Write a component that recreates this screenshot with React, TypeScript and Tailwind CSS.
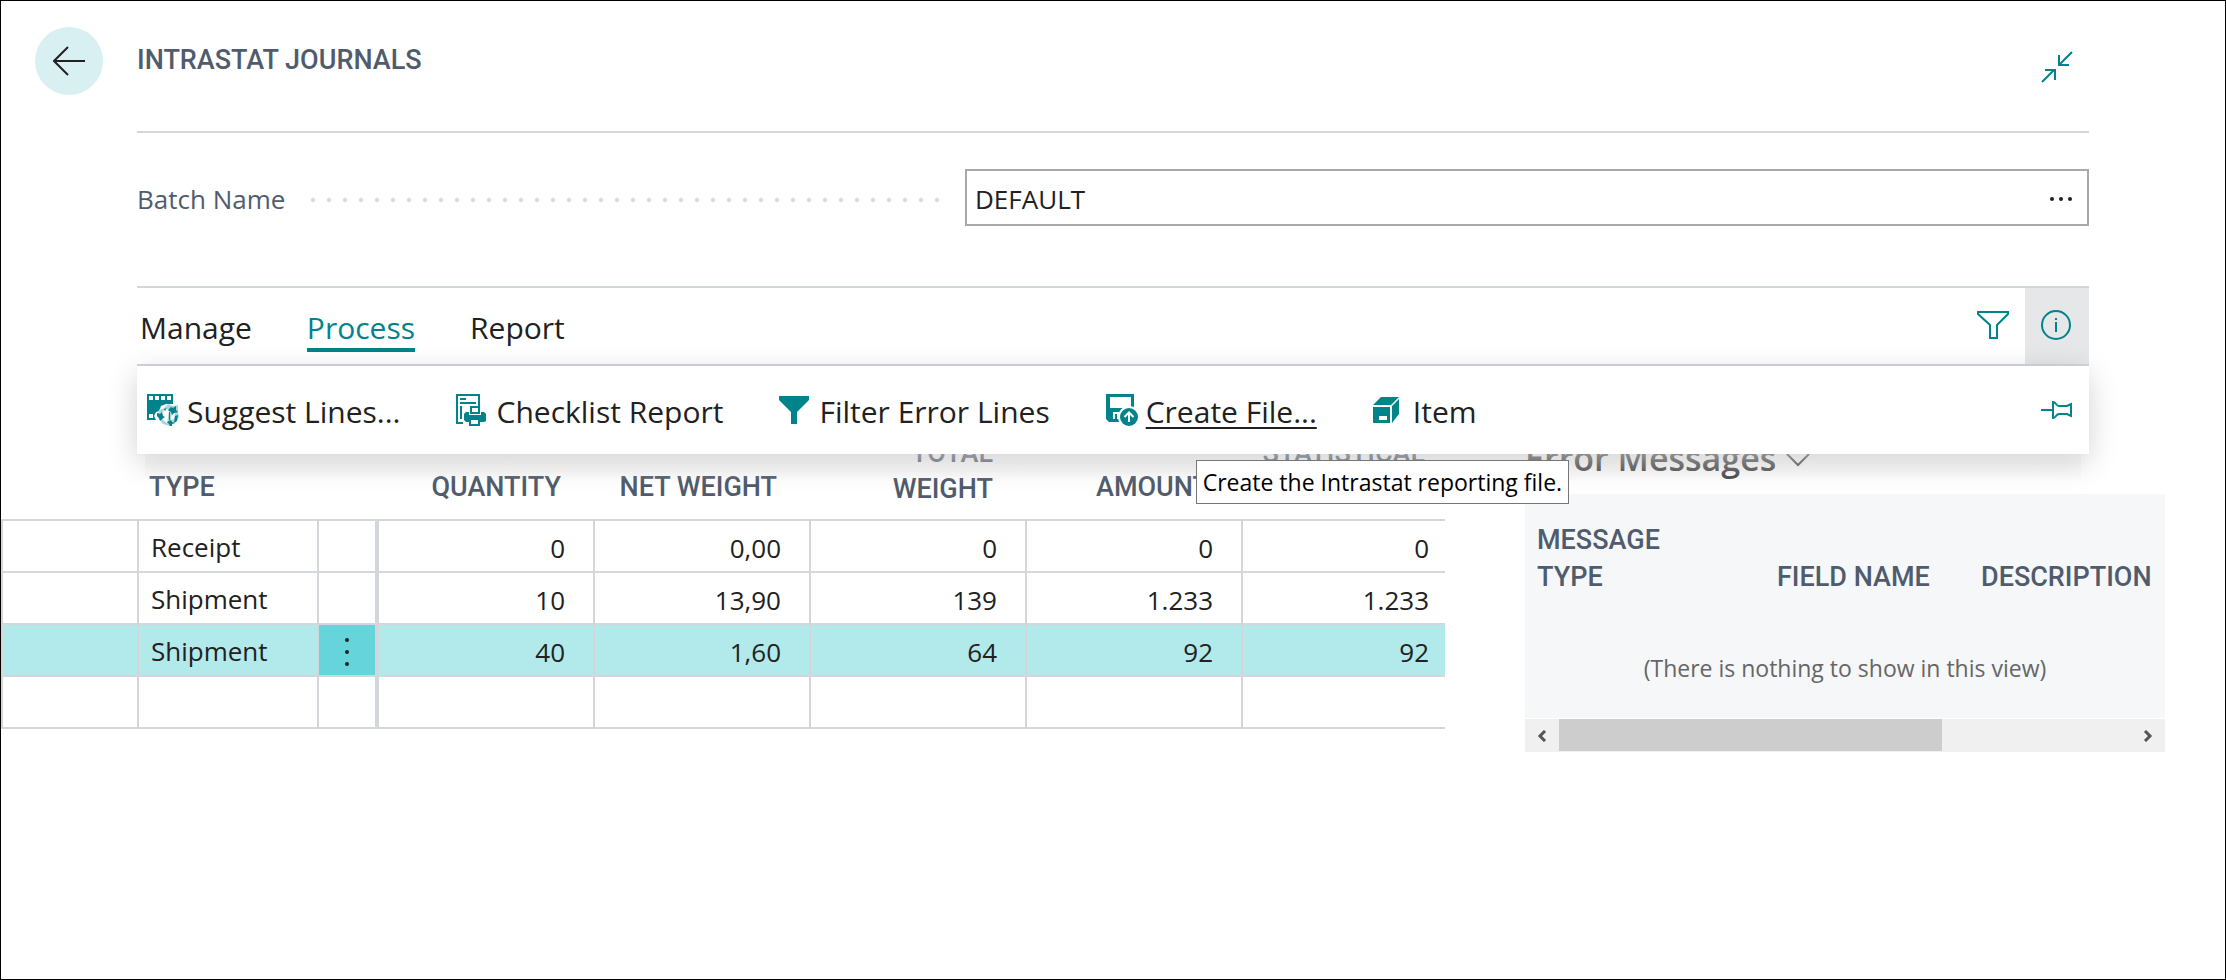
import type { ReactNode } from 'react';

const SuggestLinesIcon = () => (
  <svg width="32" height="32" viewBox="0 0 32 32" fill="#00838a">
    <path d="M0 0h26v26H0z" />
    <path fill="#fff" d="M2 2h4v4H2zM8 2h4v4H8zM14 2h4v4h-4zM20 2h4v4h-4zM2 20h4v4H2z" />
    <path fill="#fff" d="M19 10h7v16H9l-2-4 2-4 3-1 2-5z" />
    <path fill="#a9d6d8" d="M21 10l5 2 5-1v6l1 6-4 6-6 3-6-2-4-5-2-4 3-5 4-2z" />
    <path fill="#fff" d="M19 14l3 3-2 12-4-3-1-7zM25 17l3 2-1 6-3 1z" />
    <path d="M24 13l2 1 3-2v4l2 2-4 1-2 2-1-3-3-2zM10 19l3 1 2-2 1 4 2 1-3 2-2 2-1-3-2-2zM20 28l2-1 2-1 1 2 3 1-3 1v2h-2l-1-2zM28 22l3-1-1 6-3 2z" />
    <path d="M22 18h1v8h-1zM17 15l3-1-2 3z" />
  </svg>
);

const ChecklistIcon = () => (
  <svg width="30" height="32" viewBox="0 0 30 32" fill="#00838a">
    <path d="M0 0h24v12h-2V2H2v26h5v2H0zM4 4h6v2H4zM4 8h16v2H4zM4 12h2v13H4z" />
    <path fillRule="evenodd" d="M14 12h10v8h-10zM16 14v4h6v-4z" />
    <path fillRule="evenodd" d="M10 18h3v3h12v-3h3l2 2v7l-2 1h-4v4H13v-4h-3l-2-2v-6zM15 26v4h7v-4z" />
  </svg>
);

const FilterSolidIcon = () => (
  <svg width="30" height="28" viewBox="0 0 30 28" fill="#00838a">
    <path d="M0 0h30v4L18 16v12h-6V16L0 4z" />
  </svg>
);

const CreateFileIcon = () => (
  <svg width="32" height="32" viewBox="0 0 32 32" fill="#00838a">
    <path fillRule="evenodd" d="M0 0h28v28H3l-3-3zM4 3v11h21V3z" />
    <path fill="#fff" d="M7 18h6v7H7z" />
    <path d="M9 20h2v6H9z" />
    <circle cx="23" cy="23" r="11" fill="#fff" />
    <circle cx="23" cy="23" r="9" />
    <path fill="none" stroke="#fff" strokeWidth="2" d="M23 28V19M18.500 23l4.500-4.500 4.500 4.500" />
  </svg>
);

const ItemIcon = () => (
  <svg width="26" height="26" viewBox="0 0 26 26" fill="#00838a">
    <path d="M0 8l8-8h18l-8 8zM0 10h17v16H0zM19 9l7-7v15l-7 9z" />
    <path fill="#fff" d="M6 19h8v4H6z" />
  </svg>
);

const BackIcon = () => (
  <svg width="32" height="30" viewBox="0 0 32 30" fill="none" stroke="#212121" strokeWidth="2">
    <path d="M32 15H1M15 1L1 15l14 14" />
  </svg>
);

const CollapseIcon = () => (
  <svg width="32" height="32" viewBox="0 0 32 32" fill="none" stroke="#00838a" strokeWidth="2">
    <path d="M31 1L19 13M18 4v10h10M1 31l12-12M4 19h10v10" />
  </svg>
);

const FilterIcon = () => (
  <svg width="32" height="28" viewBox="0 0 32 28" fill="none" stroke="#00838a" strokeWidth="2">
    <path d="M1 1h30v2L20 14v13h-7V14L1 3z" />
  </svg>
);

const InfoIcon = () => (
  <svg width="30" height="30" viewBox="0 0 30 30" fill="none" stroke="#00838a" strokeWidth="2">
    <circle cx="15" cy="15" r="14" />
    <path d="M15 12v10M15 8v2" />
  </svg>
);

const PinIcon = () => (
  <svg width="32" height="18" viewBox="0 0 32 18" fill="none" stroke="#00838a" strokeWidth="2">
    <path d="M0 9h12M12 1v16c3 0 3-4 6-4h8l4 2V3l-4 2h-8c-3 0-3-4-6-4z" />
  </svg>
);

const tabs = [
  { label: 'Manage', active: false },
  { label: 'Process', active: true },
  { label: 'Report', active: false }
];

const ActionButton = ({ icon, label, underlined, tooltip }: {
  icon: ReactNode;
  label: string;
  underlined?: boolean;
  tooltip?: string;
}) => (
  <div className="relative">
    <button type="button" className="flex items-center gap-2">
      <span className="w-8">{icon}</span>
      <span className={`pt-1 ${underlined ? 'underline decoration-2 underline-offset-4' : ''}`}>{label}</span>
    </button>
    {tooltip && (
      <div role="tooltip" className="absolute top-full left-[90px] mt-7 border border-[#767676] bg-white px-1.5 text-[23px] leading-[42px] whitespace-nowrap text-black">
        {tooltip}
      </div>
    )}
  </div>
);

const lines = [
  { type: 'Receipt', values: ['0', '0,00', '0', '0', '0'], selected: false },
  { type: 'Shipment', values: ['10', '13,90', '139', '1.233', '1.233'], selected: false },
  { type: 'Shipment', values: ['40', '1,60', '64', '92', '92'], selected: true },
  { type: '', values: ['', '', '', '', ''], selected: false }
];

const amountHeaders = [
  { label: 'QUANTITY', padding: 'pr-8 pb-3.5' },
  { label: 'NET WEIGHT', padding: 'pr-8 pb-3.5' },
  { label: 'TOTAL WEIGHT', padding: 'pr-8 pb-3 pl-20' },
  { label: 'AMOUNT', padding: 'pr-8 pb-3.5' },
  { label: 'STATISTICAL VALUE', padding: 'pr-5 pb-3 pl-2' }
];

const JournalLines = () => (
  <table className="w-full table-fixed border-separate border-spacing-0 text-[26px] text-[#212121]">
    <colgroup>
      <col className="w-[136px]" />
      <col className="w-[180px]" />
      <col className="w-[58px]" />
      <col className="w-[218px]" />
      <col className="w-[216px]" />
      <col className="w-[216px]" />
      <col className="w-[216px]" />
      <col />
    </colgroup>
    <thead>
      <tr className="h-[155px] align-bottom font-[Roboto] text-[27px] leading-9 text-[#505c6d]">
        <td className="border-b-2 border-[#d3d6db]" />
        <th className="border-b-2 border-[#d3d6db] pb-3.5 pl-3 text-left font-medium">TYPE</th>
        <td className="border-b-2 border-[#d3d6db]" />
        {amountHeaders.map((header) => (
          <th key={header.label} className={`border-b-2 border-[#d3d6db] text-right font-medium ${header.padding}`}>
            {header.label}
          </th>
        ))}
      </tr>
    </thead>
    <tbody>
      {lines.map((line, row) => (
        <tr key={row} className={`h-[52px] ${line.selected ? 'bg-[#b2e9eb]' : ''}`}>
          <td className="border-b-2 border-l-2 border-[#d3d6db]" />
          <td className="border-b-2 border-l-2 border-[#d3d6db] pt-0.5 pl-3">{line.type}</td>
          <td className={`border-b-2 border-l-2 border-[#d3d6db] ${line.selected ? 'bg-[#66d4db]' : ''}`}>
            {line.selected && (
              <button type="button" aria-label="Show more options" className="flex w-full justify-center pt-1">
                <svg width="4" height="30" viewBox="0 0 4 30" fill="#212121">
                  <circle cx="2" cy="3" r="2" />
                  <circle cx="2" cy="15" r="2" />
                  <circle cx="2" cy="27" r="2" />
                </svg>
              </button>
            )}
          </td>
          {line.values.map((value, i) => (
            <td
              key={i}
              className={`border-b-2 border-[#d3d6db] pt-1 text-right ${i === 0 ? 'border-l-4' : 'border-l-2'} ${i === 4 ? 'pr-4' : 'pr-7'}`}
            >
              {value}
            </td>
          ))}
        </tr>
      ))}
    </tbody>
  </table>
);

const ErrorMessages = () => (
  <section className="w-[640px] shrink-0">
    <h2 className="flex h-32 items-end gap-2.5 pb-4 text-[34px] leading-10 font-semibold text-[#444]">
      Error Messages
      <svg width="24" height="28" viewBox="0 0 24 28" fill="none" stroke="#444" strokeWidth="2">
        <path d="M1 4l11 11L23 4" />
      </svg>
    </h2>
    <div className="h-56 bg-[#f5f7f9] pt-7">
      <table className="w-full table-fixed text-left">
        <thead>
          <tr className="align-bottom font-[Roboto] text-[27px] leading-[37px] text-[#505c6d]">
            <th className="w-[240px] pr-24 pl-3 font-medium">MESSAGE TYPE</th>
            <th className="w-[204px] pl-3 font-medium whitespace-nowrap">FIELD NAME</th>
            <th className="pl-3 font-medium">DESCRIPTION</th>
          </tr>
        </thead>
        <tbody>
          <tr>
            <td colSpan={3} className="pt-[52px] text-center text-[23px] leading-10 text-[#666]">
              (There is nothing to show in this view)
            </td>
          </tr>
        </tbody>
      </table>
    </div>
    <div className="mt-px flex h-[33px] items-center justify-between bg-[#f0f0f0]">
      <button type="button" aria-label="Scroll left" className="flex w-[34px] justify-center">
        <svg width="10" height="12" viewBox="0 0 10 12" fill="none" stroke="#555" strokeWidth="3">
          <path d="M8 1L3 6l5 5" />
        </svg>
      </button>
      <div className="flex h-8 flex-1 self-start">
        <div className="w-[67%] bg-[#cdcdcd]" />
      </div>
      <button type="button" aria-label="Scroll right" className="flex w-[34px] justify-center">
        <svg width="10" height="12" viewBox="0 0 10 12" fill="none" stroke="#555" strokeWidth="3">
          <path d="M2 1l5 5-5 5" />
        </svg>
      </button>
    </div>
  </section>
);

export default function App() {
  return (
    <main className="min-h-screen border border-black bg-white font-['Open_Sans',sans-serif] text-[#212121]">
      <header className="flex items-start pr-[136px] pl-[34px]">
        <button
          type="button"
          aria-label="Back"
          className="mt-[26px] mr-[34px] flex size-[68px] shrink-0 items-center justify-center rounded-full bg-[#d9f0f2]"
        >
          <BackIcon />
        </button>
        <div className="flex h-[132px] flex-1 items-start justify-between border-b-2 border-[#d3d6db] pr-4">
          <h1 className="mt-10 font-[Roboto] text-[27px] leading-[38px] font-medium text-[#505c6d]">INTRASTAT JOURNALS</h1>
          <button type="button" aria-label="Collapse" className="mt-[50px]">
            <CollapseIcon />
          </button>
        </div>
      </header>

      <div className="px-[136px]">
        <div className="mt-9 flex h-[57px] items-center">
          <label htmlFor="batch-name" className="flex w-[828px] items-center pt-1 pr-4 text-[26px] text-[#505c6d]">
            Batch Name
            <span className="ml-5 h-4 flex-1 bg-[radial-gradient(circle,#d3d6db_1px,transparent_3px)] bg-[size:16px_16px]" />
          </label>
          <div className="flex h-full flex-1 items-center border-2 border-[#a8a8a8] pr-3.5">
            <input id="batch-name" defaultValue="DEFAULT" className="h-full flex-1 px-2 pt-0.5 text-[26px] outline-none" />
            <button type="button" aria-label="Choose batch" className="pt-0.5">
              <svg width="24" height="4" viewBox="0 0 24 4" fill="#212121">
                <circle cx="3" cy="2" r="2" />
                <circle cx="12" cy="2" r="2" />
                <circle cx="21" cy="2" r="2" />
              </svg>
            </button>
          </div>
        </div>

        <div className="relative mt-[60px]">
          <div className="flex h-20 justify-between border-y-2 border-[#d3d6db]">
            <nav className="flex items-start gap-[55px] pt-5 pl-[3px] text-[30px] leading-10">
              {tabs.map((tab) => (
                <button
                  key={tab.label}
                  type="button"
                  className={`border-b-4 ${tab.active ? 'border-[#00838a] text-[#00838a]' : 'border-transparent'}`}
                >
                  {tab.label}
                </button>
              ))}
            </nav>
            <div className="flex">
              <button type="button" aria-label="Filter" className="flex w-16 items-center justify-center pb-0.5">
                <FilterIcon />
              </button>
              <button type="button" aria-label="Details" className="flex w-16 items-center justify-center bg-[#e5e7e9] pr-0.5 pb-0.5">
                <InfoIcon />
              </button>
            </div>
          </div>

          {/* action flyout, floats over the lines below */}
          <div className="absolute inset-x-0 top-full z-10 flex h-[88px] items-center justify-between bg-white pr-4 pl-2.5 text-[30px] leading-10 shadow-[0_8px_28px_rgba(0,0,0,0.18)]">
            <div className="absolute inset-x-2 top-full h-7 bg-linear-to-b from-[#e0e0e0]/50 to-transparent" />
            <div className="flex gap-14">
              <ActionButton icon={<SuggestLinesIcon />} label="Suggest Lines..." />
              <ActionButton icon={<ChecklistIcon />} label="Checklist Report" />
              <ActionButton icon={<FilterSolidIcon />} label="Filter Error Lines" />
              <ActionButton icon={<CreateFileIcon />} label="Create File..." underlined tooltip="Create the Intrastat reporting file." />
              <ActionButton icon={<ItemIcon />} label="Item" />
            </div>
            <button type="button" aria-label="Pin">
              <PinIcon />
            </button>
          </div>
        </div>
      </div>

      <div className="flex items-start gap-20 pr-[60px]">
        <div className="min-w-0 flex-1">
          <JournalLines />
        </div>
        <ErrorMessages />
      </div>
    </main>
  );
}
